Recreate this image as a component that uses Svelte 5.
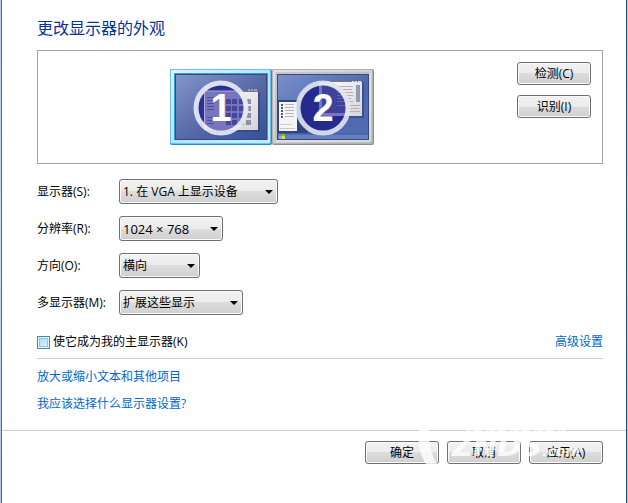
<script>
  let display = $state('1. 在 VGA 上显示设备')
  let resolution = $state('1024 × 768')
  let orientation = $state('横向')
  let multi = $state('扩展这些显示')
  let isMain = $state(false)
  let selected = $state(1)
</script>

<div class="window">
  <main>
    <section class="content">
      <h1>更改显示器的外观</h1>

      <div class="preview">
        <div class="monitors">
          <button class="monitor" aria-label="显示器 1" onclick={() => selected = 1}>
            <svg width="102" height="76" viewBox="0 0 102 76">
              <defs>
                <linearGradient id="screen1" x1="0" y1="0" x2="1" y2="1">
                  <stop offset="0" stop-color="#8296c8" />
                  <stop offset="0.55" stop-color="#5568a6" />
                  <stop offset="1" stop-color="#35509c" />
                </linearGradient>
                <linearGradient id="paper" x1="0" y1="0" x2="1" y2="1">
                  <stop offset="0" stop-color="#ffffff" />
                  <stop offset="1" stop-color="#d4d4d8" />
                </linearGradient>
                <linearGradient id="glow" x1="0" y1="0" x2="1" y2="1">
                  <stop offset="0" stop-color="#e2f5ff" />
                  <stop offset="0.5" stop-color="#b8e4fc" />
                  <stop offset="1" stop-color="#c8ecff" />
                </linearGradient>
                <linearGradient id="frame" x1="0" y1="0" x2="1" y2="1">
                  <stop offset="0" stop-color="#e2e2e4" />
                  <stop offset="1" stop-color="#bcbcc0" />
                </linearGradient>
                <clipPath id="disc">
                  <circle cx="51" cy="39" r="23" />
                </clipPath>
              </defs>
              {#if selected === 1}
                <rect width="102" height="76" rx="2" fill="#1c8fdc" />
                <rect width="101" height="75" rx="2" fill="#69bff2" />
                <rect x="1" y="1" width="99" height="73" rx="1" fill="url(#glow)" />
                <path d="M4 71V4h94v67z" fill="#2c9fe6" />
              {:else}
                <rect width="102" height="76" rx="2" fill="#8d8d90" />
                <rect x="1" y="1" width="99" height="73" rx="1" fill="url(#frame)" />
              {/if}
              <rect x="5" y="5" width="92" height="66" fill="#334a87" />
              <rect x="6" y="6" width="90" height="64" fill="url(#screen1)" />
              <path d="M35 63h55V23h-2v38H35z" fill="#3b456f" opacity="0.7" />
              <rect x="34" y="22" width="54" height="39" fill="url(#paper)" />
              <rect x="34" y="21" width="54" height="2" fill="#77777c" />
              <path d="M78 21h2m1 0h2m1 0h3" stroke="#d8d8dc" />
              {#each [30, 37, 44, 51] as y}
                {#each [56, 62, 69, 76] as x}
                  <rect {x} {y} width="5" height="5" fill="#8d91aa" />
                {/each}
              {/each}
              <circle cx="51" cy="39" r="23" fill="#2b3190" />
              <g clip-path="url(#disc)">
                <rect x="34" y="22" width="54" height="41" fill="#7775bc" />
                <path d="M34 22h54M34.500 22v39" stroke="#aaa6d8" />
                <path d="M37 28.500h7M37 31.500h7M37 34.500h7M37 37.500h7M37 40.500h7M37 48.500h7M37 51.500h7M37 54.500h7" stroke="#514f9d" />
                {#each [30, 37, 44, 51] as y}
                  {#each [56, 62, 69, 76] as x}
                    <rect {x} {y} width="5" height="5" fill="#45479a" />
                  {/each}
                {/each}
              </g>
              <circle cx="51" cy="39" r="25" fill="none" stroke="#e5e7f4" stroke-width="5" opacity="0.93" />
              <text x="51" y="52" class="number">1</text>
            </svg>
          </button>
          <button class="monitor" aria-label="显示器 2" onclick={() => selected = 2}>
            <svg width="102" height="76" viewBox="0 0 102 76">
              <defs>
                <linearGradient id="screen2" x1="0" y1="0" x2="1" y2="1">
                  <stop offset="0" stop-color="#7a90c9" />
                  <stop offset="0.6" stop-color="#4a66ad" />
                  <stop offset="1" stop-color="#5470b4" />
                </linearGradient>
              </defs>
              {#if selected === 2}
                <rect width="102" height="76" rx="2" fill="#1c8fdc" />
                <rect x="1" y="1" width="99" height="73" rx="1" fill="url(#glow)" />
                <path d="M4 71V4h94v67z" fill="#2c9fe6" />
              {:else}
                <rect width="102" height="76" rx="2" fill="#8d8d90" />
                <rect width="101" height="75" rx="2" fill="#b2b2b5" />
                <rect x="1" y="1" width="99" height="73" rx="1" fill="url(#frame)" />
                <path d="M4 72V4h94" fill="none" stroke="#b0b0b4" />
                <path d="M98 4v68H4" fill="none" stroke="#f2f2f4" />
              {/if}
              <rect x="5" y="5" width="92" height="66" fill="#334a87" />
              <rect x="6" y="6" width="90" height="64" fill="url(#screen2)" />
              <rect x="6" y="65" width="90" height="5" fill="#6680bc" />
              <path d="M6 65h90" stroke="#3e579a" />
              <rect x="47" y="13" width="45" height="36" fill="#35467d" opacity="0.7" />
              <rect x="47" y="12" width="43" height="35" fill="url(#paper)" />
              <path d="M47 12.500h43" stroke="#77777c" />
              <path d="M80 12.500h2m1 0h2m1 0h3" stroke="#d8d8dc" />
              <rect x="84" y="16" width="4" height="17" fill="#8d9ab8" />
              <path d="M65 17.500h16M65 20.500h15M65 23.500h16M65 26.500h16M65 29.500h14M65 32.500h16M65 36.500h23M65 39.500h22M65 42.500h23" stroke="#b2b2b7" />
              <rect x="6" y="31" width="30" height="33" fill="#2f437c" />
              <rect x="7" y="33" width="18" height="29" fill="#f5f5f7" />
              {#each [35, 38, 41, 44, 47] as y}
                <rect x="9" {y} width="2" height="2" fill="#55555c" />
                <rect x="13" {y} width="9" height="1" fill="#b4b4b8" />
              {/each}
              <path d="M8 55.500h12M8 59.500h15" stroke="#cacace" />
              <path d="M7 65h3v2H7z" fill="#e46c35" />
              <path d="M10 65h3v2h-3z" fill="#69c45b" />
              <path d="M7 67h3v3H7z" fill="#61bdf1" />
              <path d="M10 67h3v3h-3z" fill="#f2d450" />
              <circle cx="51" cy="39" r="23" fill="#252b8c" />
              <g clip-path="url(#disc)">
                <rect x="47" y="10" width="45" height="37" fill="#7775bc" />
                <path d="M50 10h42v34H50z" fill="#3f429b" />
                <path d="M65 17.500h16M65 20.500h15M65 23.500h16M65 26.500h16M65 29.500h14M65 32.500h16M65 36.500h23" stroke="#625fac" />
              </g>
              <circle cx="51" cy="39" r="25" fill="none" stroke="#e0e3f2" stroke-width="5" opacity="0.9" />
              <text x="51" y="52" class="number">2</text>
            </svg>
          </button>
        </div>
        <div class="side">
          <button class="btn">检测(C)</button>
          <button class="btn">识别(I)</button>
        </div>
      </div>

      <div class="fields">
        <label for="display">显示器(S):</label>
        <div class="select">
          <select id="display" bind:value={display}>
            <option>1. 在 VGA 上显示设备</option>
          </select>
        </div>
        <label for="resolution">分辨率(R):</label>
        <div class="select medium">
          <select id="resolution" bind:value={resolution}>
            <option>1024 × 768</option>
          </select>
        </div>
        <label for="orientation">方向(O):</label>
        <div class="select small">
          <select id="orientation" bind:value={orientation}>
            <option>横向</option>
            <option>纵向</option>
          </select>
        </div>
        <label for="multi">多显示器(M):</label>
        <div class="select large">
          <select id="multi" bind:value={multi}>
            <option>扩展这些显示</option>
          </select>
        </div>
      </div>

      <div class="options">
        <label class="check">
          <input type="checkbox" bind:checked={isMain}>
          使它成为我的主显示器(K)
        </label>
        <a href="#advanced">高级设置</a>
      </div>

      <nav>
        <a href="#text-size">放大或缩小文本和其他项目</a>
        <a href="#help">我应该选择什么显示器设置?</a>
      </nav>
    </section>

    <footer>
      <button class="btn">确定</button>
      <button class="btn">取消</button>
      <button class="btn">应用(A)</button>
      <div class="watermark" aria-hidden="true">
        <svg width="162" height="36" viewBox="0 0 162 36">
          <path d="M1 0C-1 14 3 28 8 35h11C13 25 10 12 11 0z" fill="#fff" />
          <path d="M48 1.500h100" stroke="#fff" stroke-width="2" stroke-dasharray="5 2 9 3 4 1" />
        </svg>
        <div class="brand">ZNDS<span>.com</span></div>
      </div>
    </footer>
  </main>
</div>

<style>
  :global(body) {
    margin: 0;
    background: #fff;
  }
  .window {
    display: flex;
    min-height: 100vh;
    padding: 0 1px;
    box-sizing: border-box;
    background: linear-gradient(#b4cdea, #c7dcf2 50%, #a9c4e6);
  }
  main {
    flex: 1;
    display: flex;
    flex-direction: column;
    border-left: 1px solid #5a6b80;
    border-right: 1px solid #1f4a82;
    background: #fff;
    color: #000;
    font: 12px/16px "Open Sans", "Noto Sans CJK SC", sans-serif;
  }
  .content {
    padding: 16px 23px 18px 35px;
  }
  h1 {
    margin: 0 0 10px;
    color: #003399;
    font-size: 16px;
    font-weight: 400;
    line-height: 24px;
  }
  .preview {
    position: relative;
    display: flex;
    justify-content: center;
    padding: 18px 11px;
    border: 1px solid #a0a0a0;
  }
  .monitors {
    display: flex;
    padding-right: 96px;
  }
  .side {
    position: absolute;
    top: 11px;
    right: 11px;
    display: flex;
    flex-direction: column;
    gap: 10px;
  }
  .monitor {
    padding: 0;
    border: 0;
    background: none;
  }
  .monitor svg {
    display: block;
  }
  .number {
    fill: #fff;
    font: bold 38px "Liberation Sans", sans-serif;
    text-anchor: middle;
  }
  .btn,
  select {
    box-sizing: border-box;
    border: 1px solid #707070;
    border-radius: 3px;
    background: linear-gradient(#f2f2f2, #ebebeb 50%, #dddddd 50%, #cfcfcf);
    box-shadow: inset 0 0 0 1px #fafafa;
    color: #000;
    font: inherit;
  }
  .btn {
    width: 74px;
    height: 23px;
    padding: 0;
  }
  .fields {
    display: grid;
    grid-template-columns: 82px 1fr;
    gap: 12px 0;
    align-items: center;
    margin-top: 15px;
  }
  .select {
    position: relative;
    width: 159px;
  }
  .select.medium {
    width: 104px;
    font-size: 13px;
  }
  .select.small {
    width: 81px;
  }
  .select.large {
    width: 124px;
  }
  .select::after {
    content: '';
    position: absolute;
    top: 11px;
    right: 5px;
    border: 4px solid transparent;
    border-top-color: #000;
    border-bottom: 0;
    pointer-events: none;
  }
  select {
    display: block;
    width: 100%;
    height: 25px;
    padding: 0 3px;
    appearance: none;
  }
  .options {
    display: flex;
    justify-content: space-between;
    align-items: center;
    margin-top: 19px;
    padding-bottom: 8px;
    border-bottom: 1px solid #cccccc;
  }
  .check {
    display: flex;
    align-items: center;
    gap: 3px;
  }
  .check input {
    width: 13px;
    height: 13px;
    margin: 0;
    border: 1px solid #4f86a8;
    background: linear-gradient(135deg, #a9d8f6, #e4f4fd);
    box-shadow: inset 0 0 0 1px #def4fd, inset 0 0 0 2px #8ec5e8;
    appearance: none;
  }
  .check input:checked {
    background: #2c628b;
  }
  a {
    color: #0066cc;
    text-decoration: none;
  }
  nav {
    display: flex;
    flex-direction: column;
    align-items: flex-start;
    gap: 11px;
    margin-top: 10px;
  }
  footer {
    position: relative;
    display: flex;
    justify-content: flex-end;
    gap: 8px;
    padding: 10px 23px;
    border-top: 1px solid #cccccc;
  }
  /* site mark laid over the buttons */
  .watermark {
    position: absolute;
    top: -2px;
    right: 46px;
    opacity: 0.8;
    pointer-events: none;
  }
  .watermark svg {
    display: block;
  }
  .brand {
    position: absolute;
    right: 0;
    bottom: 0;
    color: #fff;
    font: italic bold 29px/28px "DejaVu Sans", sans-serif;
    white-space: nowrap;
  }
  .brand span {
    font-size: 14px;
  }
</style>
